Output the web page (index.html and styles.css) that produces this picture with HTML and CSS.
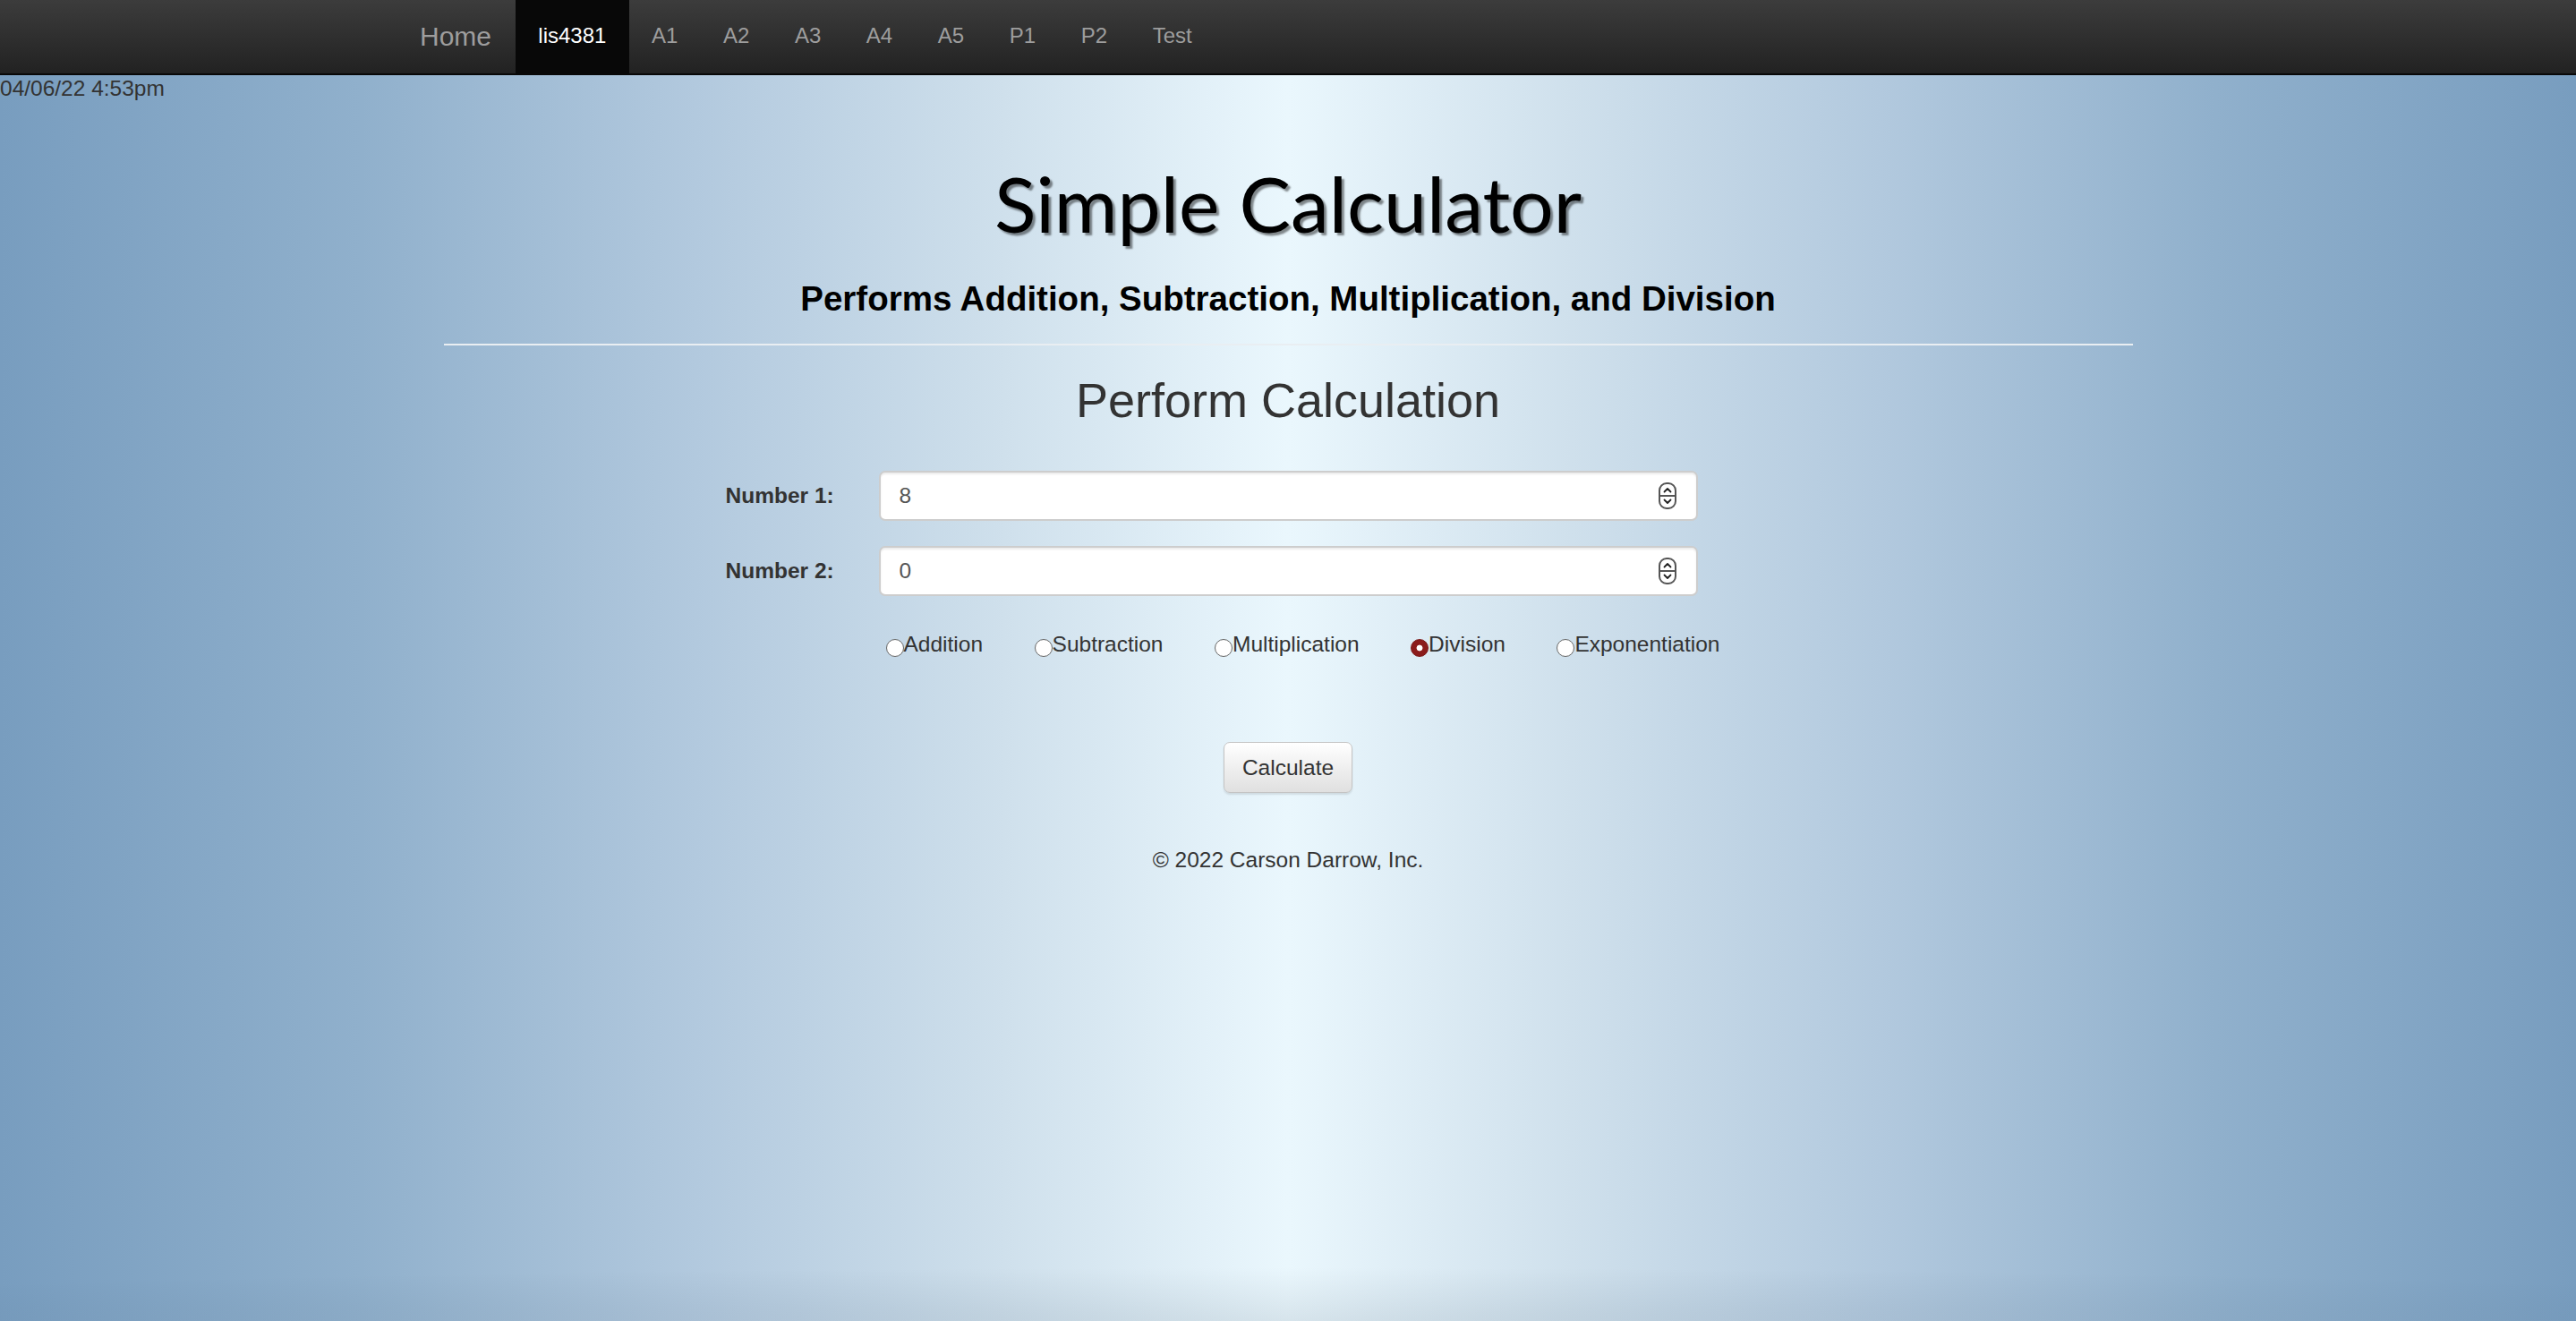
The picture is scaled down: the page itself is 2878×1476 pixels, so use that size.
FILE: index.html
```html
<!DOCTYPE html>
<html lang="en">
<head>
<meta charset="utf-8">
<title>Simple Calculator</title>
<link rel="stylesheet" href="styles.css">
</head>
<body>
<nav class="navbar">
  <div class="nav-inner">
    <a class="brand" href="#">Home</a>
    <ul class="nav">
      <li class="nav-item active"><a href="#">lis4381</a></li>
      <li class="nav-item"><a href="#">A1</a></li>
      <li class="nav-item"><a href="#">A2</a></li>
      <li class="nav-item"><a href="#">A3</a></li>
      <li class="nav-item"><a href="#">A4</a></li>
      <li class="nav-item"><a href="#">A5</a></li>
      <li class="nav-item"><a href="#">P1</a></li>
      <li class="nav-item"><a href="#">P2</a></li>
      <li class="nav-item"><a href="#">Test</a></li>
    </ul>
  </div>
</nav>
<div class="date">04/06/22 4:53pm</div>
<main class="page">
  <h1 class="title">Simple Calculator</h1>
  <p class="subtitle">Performs Addition, Subtraction, Multiplication, and Division</p>
  <hr class="rule">
  <h2 class="section-title">Perform Calculation</h2>
  <form class="calc">
    <div class="field">
      <label class="field-label" for="num1">Number 1:</label>
      <div class="input-wrap">
        <input class="num-input" id="num1" type="text" value="8">
        <svg class="spinner" viewBox="0 0 20 30" width="20" height="30">
          <rect x="1" y="1" width="18" height="28" rx="8" ry="8" fill="#fff" stroke="#555" stroke-width="2"/>
          <line x1="1" y1="15" x2="19" y2="15" stroke="#555" stroke-width="2"/>
          <path d="M6.5 10.5 L10 7 L13.5 10.5" fill="none" stroke="#222" stroke-width="1.8" stroke-linecap="round" stroke-linejoin="round"/>
          <path d="M6.5 19.5 L10 23 L13.5 19.5" fill="none" stroke="#222" stroke-width="1.8" stroke-linecap="round" stroke-linejoin="round"/>
        </svg>
      </div>
    </div>
    <div class="field field-second">
      <label class="field-label" for="num2">Number 2:</label>
      <div class="input-wrap">
        <input class="num-input" id="num2" type="text" value="0">
        <svg class="spinner" viewBox="0 0 20 30" width="20" height="30">
          <rect x="1" y="1" width="18" height="28" rx="8" ry="8" fill="#fff" stroke="#555" stroke-width="2"/>
          <line x1="1" y1="15" x2="19" y2="15" stroke="#555" stroke-width="2"/>
          <path d="M6.5 10.5 L10 7 L13.5 10.5" fill="none" stroke="#222" stroke-width="1.8" stroke-linecap="round" stroke-linejoin="round"/>
          <path d="M6.5 19.5 L10 23 L13.5 19.5" fill="none" stroke="#222" stroke-width="1.8" stroke-linecap="round" stroke-linejoin="round"/>
        </svg>
      </div>
    </div>
    <div class="ops">
      <label class="op"><input class="radio" type="radio" name="op">Addition</label>
      <label class="op"><input class="radio" type="radio" name="op">Subtraction</label>
      <label class="op"><input class="radio" type="radio" name="op">Multiplication</label>
      <label class="op"><input class="radio" type="radio" name="op" checked>Division</label>
      <label class="op"><input class="radio" type="radio" name="op">Exponentiation</label>
    </div>
    <div class="actions">
      <button class="btn" type="button">Calculate</button>
    </div>
  </form>
  <footer class="footer">© 2022 Carson Darrow, Inc.</footer>
</main>
</body>
</html>
```
FILE: styles.css
```css
html {
  height: 100%;
}
body {
  margin: 0;
  min-height: 100%;
  font-family: "Liberation Sans", Arial, Helvetica, sans-serif;
  color: #333;
  background:
    radial-gradient(ellipse 70% 60px at 50% 100%, rgba(40, 60, 80, 0.1), rgba(40, 60, 80, 0) 100%),
    linear-gradient(to right, #789dbf 0%, #90b0cc 14%, #b2c9de 27%, #cfe0ec 39%, #eaf7fd 50%, #cfe0ec 61%, #b2c9de 73%, #90b0cc 86%, #789dbf 100%);
}

/* navbar */
.navbar {
  height: 82px;
  background: linear-gradient(to bottom, #3c3c3c 0%, #222 100%);
  border-bottom: 2px solid #080808;
}
.nav-inner {
  display: flex;
  height: 100%;
  padding-left: 443px;
}
.brand {
  display: block;
  padding: 0 27px 0 26px;
  font-size: 30px;
  line-height: 82px;
  color: #9d9d9d;
  text-decoration: none;
}
.nav {
  display: flex;
  margin: 0;
  padding: 0;
  list-style: none;
}
.nav-item a {
  display: block;
  padding: 0 25.3px 2px;
  font-size: 24px;
  line-height: 80px;
  color: #9d9d9d;
  text-decoration: none;
}
.nav-item.active a {
  background: #080808;
  color: #fff;
}

/* date */
.date {
  font-size: 24.5px;
  line-height: 29px;
  color: #333;
}

/* page */
.page {
  width: 1887px;
  margin: 0 auto;
  display: flex;
  flex-direction: column;
}
.title {
  margin: 62px 0 0;
  text-align: center;
  font-family: Lato, "Open Sans", sans-serif;
  font-weight: 400;
  font-size: 86px;
  line-height: 103px;
  color: #000;
  text-shadow: 3px 3px 2px rgba(0, 0, 0, 0.45);
}
.subtitle {
  margin: 34px 0 0;
  text-align: center;
  font-weight: 700;
  font-size: 38.5px;
  line-height: 44px;
  color: #000;
}
.rule {
  margin: 28px 0 0;
  border: 0;
  border-top: 2px solid #e9eef2;
  height: 0;
}
.section-title {
  margin: 32px 0 0;
  text-align: center;
  font-weight: 400;
  font-size: 54px;
  line-height: 58px;
  color: #333;
}

/* form */
.calc {
  display: flex;
  flex-direction: column;
  margin-top: 50px;
}
.field {
  display: flex;
  align-items: center;
  padding-left: 315px;
}
.field-second {
  margin-top: 28px;
}
.field-label {
  width: 171px;
  font-weight: 700;
  font-size: 24.5px;
  color: #333;
}
.input-wrap {
  position: relative;
  width: 915px;
}
.num-input {
  box-sizing: border-box;
  display: block;
  width: 100%;
  height: 56px;
  margin: 0;
  padding: 0 21px;
  border: 2px solid #cdcdcd;
  border-radius: 7px;
  background: #fff;
  box-shadow: inset 0 2px 2px rgba(0, 0, 0, 0.08);
  font-family: "Liberation Sans", Arial, sans-serif;
  font-size: 24.5px;
  color: #555;
  outline: none;
}
.spinner {
  position: absolute;
  right: 24px;
  top: 13px;
}

.ops {
  display: flex;
  gap: 57.5px;
  margin-top: 36px;
  padding-left: 494px;
  white-space: nowrap;
}
.op {
  display: flex;
  align-items: flex-start;
  font-size: 24.5px;
  line-height: 35px;
  color: #333;
}
.radio {
  -webkit-appearance: none;
  appearance: none;
  box-sizing: border-box;
  width: 20px;
  height: 20px;
  margin: 12px 0 0;
  border: 1.5px solid #666;
  border-radius: 50%;
  background: #fff;
  flex: none;
}
.radio:checked {
  border-color: #7a1717;
  background: radial-gradient(circle, #fff 0, #fff 3px, #8b1c1c 3.8px);
}

.actions {
  display: flex;
  justify-content: center;
  margin-top: 92px;
}
.btn {
  height: 57px;
  padding: 0 20px;
  border: 1.5px solid #c4c4c4;
  border-radius: 7px;
  background: linear-gradient(to bottom, #ffffff 0%, #e0e0e0 100%);
  box-shadow: 0 2px 2px rgba(0, 0, 0, 0.1);
  font-family: "Liberation Sans", Arial, sans-serif;
  font-size: 24.5px;
  color: #333;
}

.footer {
  margin-top: 57px;
  text-align: center;
  font-size: 24.5px;
  line-height: 35px;
  color: #333;
}
```
